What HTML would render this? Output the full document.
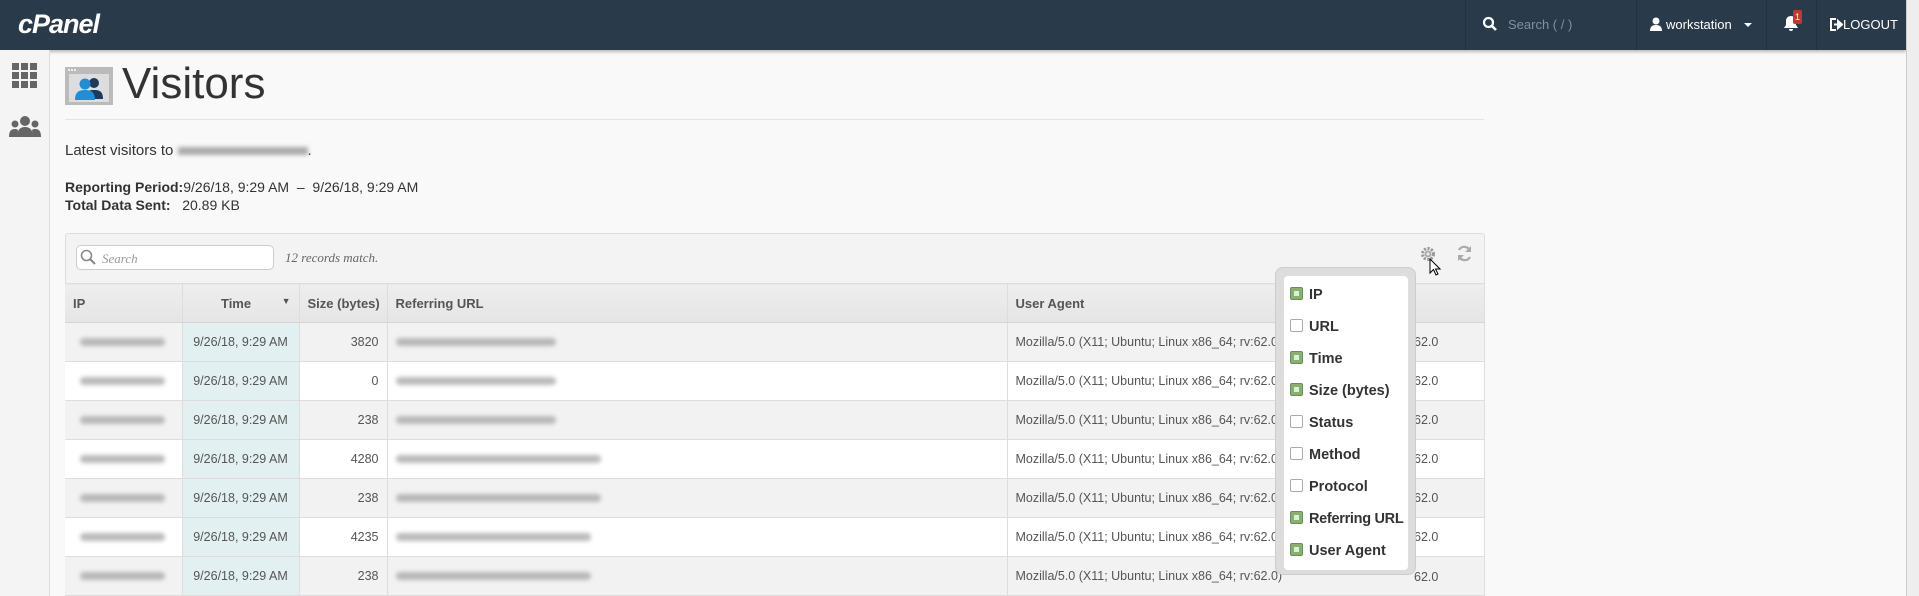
<!DOCTYPE html>
<html style="overflow:hidden;height:596px"><head><meta charset="utf-8"><style>
*{box-sizing:border-box;margin:0;padding:0}
body{width:1919px;height:596px;overflow:hidden;background:#f9f9f9;font-family:"Liberation Sans",sans-serif;position:relative;color:#333}
.top{position:absolute;left:0;top:0;width:1906px;height:50px;background:#293a4a;box-shadow:0 2px 3px rgba(0,0,0,.25)}
.abs{position:absolute}
.sep{position:absolute;top:0;width:1px;height:50px;background:#22313f}
.side{position:absolute;left:0;top:50px;width:50px;height:546px;background:#f4f4f4;border-right:1px solid #ddd}
.blur{position:absolute;height:8px;background:#aaa;border-radius:4px;filter:blur(2px);opacity:.8}
.panel{position:absolute;left:65px;top:233px;width:1420px;height:363px;border:1px solid #ddd;border-bottom:none;background:#f3f3f3;border-radius:3px 3px 0 0}
table{position:absolute;left:65px;top:283px;border-collapse:collapse;width:1420px;font-size:12.5px;table-layout:fixed}
th{height:39px;background:linear-gradient(#eee,#e5e5e5);text-align:left;font-weight:bold;font-size:13px;color:#555;border-right:1px solid #ddd;border-top:1px solid #ddd;border-bottom:1px solid #d5d5d5;padding:0 8px;white-space:nowrap}
td{height:39px;border-right:1px solid #ddd;border-bottom:1px solid #ddd;padding:0 8px;color:#555;position:relative;white-space:nowrap;overflow:hidden}
tr:nth-child(even) td{background:#f2f2f2}
tr:nth-child(odd) td{background:#fff}
td.t{background:#e3f0f1!important;text-align:center}
td.s{text-align:right}
.dd{position:absolute;left:1275px;top:267px;width:141px;height:308px;background:#ddd;border-radius:8px;border:1px solid #ccc}
.ddi{position:absolute;left:8px;top:8px;width:124px;height:294px;background:#fff;border-radius:4px}
.it{position:absolute;left:6px;font-weight:bold;font-size:14.5px;color:#333;height:20px;line-height:20px;white-space:nowrap}
.cb{display:inline-block;width:13px;height:13px;border:1px solid #aaa;border-radius:2px;vertical-align:-1px;margin-right:6px;background:#fff}
.cb.on{background:#8ab070;border-color:#6a8f55;position:relative}
.cb.on:after{content:"";position:absolute;left:3px;top:3px;width:5px;height:5px;background:#dfeed5}
</style></head><body>
<div class="top">
 <div class="abs" style="left:18px;top:9px;color:#fff;font-size:27px;font-weight:bold;font-style:italic;letter-spacing:-1px">cPanel</div>
 <div class="sep" style="left:1465px"></div><div class="sep" style="left:1636px"></div><div class="sep" style="left:1766px"></div><div class="sep" style="left:1816px"></div>
 <svg class="abs" style="left:1482px;top:16px" width="16" height="16" viewBox="0 0 16 16"><circle cx="6.5" cy="6.5" r="4.5" fill="none" stroke="#fff" stroke-width="2.2"/><path d="M10 10l4 4" stroke="#fff" stroke-width="2.6"/></svg>
 <div class="abs" style="left:1508px;top:17px;color:#8190a0;font-size:13px">Search ( / )</div>
 <svg class="abs" style="left:1650px;top:17px" width="12" height="14" viewBox="0 0 12 14"><circle cx="6" cy="4" r="3.5" fill="#fff"/><path d="M0 14c0-5 3-6 6-6s6 1 6 6z" fill="#fff"/></svg>
 <div class="abs" style="left:1666px;top:17px;color:#fff;font-size:13px">workstation</div>
 <div class="abs" style="left:1744px;top:23px;border:4px solid transparent;border-top:4px solid #fff"></div>
 <svg class="abs" style="left:1783px;top:15px" width="16" height="17" viewBox="0 0 16 17"><path d="M8 1c-3 0-5 2-5 5v4l-2 3h14l-2-3V6c0-3-2-5-5-5z M6 14a2 2 0 0 0 4 0z" fill="#fff"/></svg>
 <div class="abs" style="left:1793px;top:10px;width:9px;height:14px;background:#c0392b;color:#fff;font-size:9px;text-align:center;line-height:14px;border-radius:2px">1</div>
 <svg class="abs" style="left:1829px;top:18px" width="14" height="13" viewBox="0 0 14 13"><path d="M7 1H2v11h5" fill="none" stroke="#fff" stroke-width="2"/><path d="M5 6.5h5M9 3l4 3.5-4 3.5z" stroke="#fff" stroke-width="2" fill="#fff"/></svg>
 <div class="abs" style="left:1843px;top:17px;color:#fff;font-size:13px">LOGOUT</div>
</div>
<div class="abs" style="left:1906px;top:0;width:13px;height:596px;background:#eee;border-left:1px solid #ccc"></div>
<div class="side">
 <svg class="abs" style="left:12px;top:13px" width="25" height="25" viewBox="0 0 25 25" fill="#666"><rect x="0" y="0" width="7" height="7"/><rect x="9" y="0" width="7" height="7"/><rect x="18" y="0" width="7" height="7"/><rect x="0" y="9" width="7" height="7"/><rect x="9" y="9" width="7" height="7"/><rect x="18" y="9" width="7" height="7"/><rect x="0" y="18" width="7" height="7"/><rect x="9" y="18" width="7" height="7"/><rect x="18" y="18" width="7" height="7"/></svg>
 <svg class="abs" style="left:9px;top:65px" width="32" height="22" viewBox="0 0 32 22" fill="#666"><circle cx="16" cy="6" r="5"/><circle cx="6" cy="9" r="3.5"/><circle cx="26" cy="9" r="3.5"/><path d="M8 22c0-8 4-10 8-10s8 2 8 10z"/><path d="M0 22c0-6 2-8 6-8 2 0 3 1 3 1l-1 7z M32 22c0-6-2-8-6-8-2 0-3 1-3 1l1 7z"/></svg>
</div>
<svg class="abs" style="left:65px;top:67px" width="48" height="38" viewBox="0 0 48 38"><rect width="48" height="38" fill="#bbb"/><rect x="4" y="7" width="40" height="28" fill="#ddd"/><circle cx="4" cy="3" r="1" fill="#fff"/><circle cx="7" cy="3" r="1" fill="#fff"/><circle cx="10" cy="3" r="1" fill="#fff"/><circle cx="29" cy="16" r="5" fill="#1c3a5c"/><path d="M20 32c0-8 4-9 9-9s9 1 9 9z" fill="#1c3a5c"/><circle cx="20" cy="17" r="5.5" fill="#1e8fd6"/><path d="M10 33c0-8 4-10 10-10s10 2 10 10z" fill="#1e8fd6"/></svg>
<div class="abs" style="left:122px;top:59px;font-size:44px;color:#333">Visitors</div>
<div class="abs" style="left:65px;top:119px;width:1419px;height:1px;background:#e3e3e3"></div>
<div class="abs" style="left:65px;top:142px;font-size:15px">Latest visitors to <span style="display:inline-block;width:130px;height:8px;background:#aaa;filter:blur(2px);vertical-align:middle"></span>.</div>
<div class="abs" style="left:65px;top:178px;font-size:14px;line-height:18px"><b>Reporting Period:</b>9/26/18, 9:29 AM &nbsp;–&nbsp; 9/26/18, 9:29 AM<br><b>Total Data Sent:</b> &nbsp; 20.89 KB</div>
<div class="panel"></div>
<div class="abs" style="left:76px;top:245px;width:198px;height:25px;background:#fff;border:1px solid #ccc;border-radius:5px"></div>
<svg class="abs" style="left:80px;top:249px" width="16" height="16" viewBox="0 0 16 16"><circle cx="6.5" cy="6.5" r="5" fill="none" stroke="#888" stroke-width="1.6"/><path d="M10 10l5 5" stroke="#888" stroke-width="2"/></svg>
<div class="abs" style="left:102px;top:251px;font-size:13px;font-style:italic;color:#999;font-family:'Liberation Serif',serif">Search</div>
<div class="abs" style="left:285px;top:250px;font-size:13px;font-style:italic;color:#666;font-family:'Liberation Serif',serif">12 records match.</div>
<svg class="abs" style="left:1420px;top:246px" width="16" height="16" viewBox="0 0 16 16"><circle cx="8" cy="8" r="5.5" fill="none" stroke="#999" stroke-width="3" stroke-dasharray="2.2 1.4"/><circle cx="8" cy="8" r="3.5" fill="#aaa"/><circle cx="8" cy="8" r="1.5" fill="#eee"/></svg>
<svg class="abs" style="left:1429px;top:258px" width="12" height="18" viewBox="0 0 12 18"><path d="M1 1v14l3.5-3.5 2.5 5.5 2-1-2.5-5H11z" fill="#fff" stroke="#000" stroke-width="1"/></svg>
<svg class="abs" style="left:1456px;top:245px" width="17" height="17" viewBox="0 0 17 17"><path d="M14 6A6 6 0 0 0 3 5M3 11a6 6 0 0 0 11 1" fill="none" stroke="#aaa" stroke-width="2.2"/><path d="M15 1v6h-6zM2 16v-6h6z" fill="#aaa"/></svg>
<table>
<colgroup><col style="width:117px"><col style="width:117px"><col style="width:88px"><col style="width:620px"><col></colgroup>
<tr><th>IP</th><th style="text-align:center">Time <span style="font-size:9px;float:right">▼</span></th><th>Size (bytes)</th><th>Referring URL</th><th>User Agent</th></tr>
<tr><td><div class="blur" style="left:15px;top:15px;width:85px"></div></td><td class="t">9/26/18, 9:29 AM</td><td class="s">3820</td><td><div class="blur" style="left:8px;top:15px;width:160px"></div></td><td>Mozilla/5.0 (X11; Ubuntu; Linux x86_64; rv:62.0)</td></tr>
<tr><td><div class="blur" style="left:15px;top:15px;width:85px"></div></td><td class="t">9/26/18, 9:29 AM</td><td class="s">0</td><td><div class="blur" style="left:8px;top:15px;width:160px"></div></td><td>Mozilla/5.0 (X11; Ubuntu; Linux x86_64; rv:62.0)</td></tr>
<tr><td><div class="blur" style="left:15px;top:15px;width:85px"></div></td><td class="t">9/26/18, 9:29 AM</td><td class="s">238</td><td><div class="blur" style="left:8px;top:15px;width:160px"></div></td><td>Mozilla/5.0 (X11; Ubuntu; Linux x86_64; rv:62.0)</td></tr>
<tr><td><div class="blur" style="left:15px;top:15px;width:85px"></div></td><td class="t">9/26/18, 9:29 AM</td><td class="s">4280</td><td><div class="blur" style="left:8px;top:15px;width:205px"></div></td><td>Mozilla/5.0 (X11; Ubuntu; Linux x86_64; rv:62.0)</td></tr>
<tr><td><div class="blur" style="left:15px;top:15px;width:85px"></div></td><td class="t">9/26/18, 9:29 AM</td><td class="s">238</td><td><div class="blur" style="left:8px;top:15px;width:205px"></div></td><td>Mozilla/5.0 (X11; Ubuntu; Linux x86_64; rv:62.0)</td></tr>
<tr><td><div class="blur" style="left:15px;top:15px;width:85px"></div></td><td class="t">9/26/18, 9:29 AM</td><td class="s">4235</td><td><div class="blur" style="left:8px;top:15px;width:195px"></div></td><td>Mozilla/5.0 (X11; Ubuntu; Linux x86_64; rv:62.0)</td></tr>
<tr><td><div class="blur" style="left:15px;top:15px;width:85px"></div></td><td class="t">9/26/18, 9:29 AM</td><td class="s">238</td><td><div class="blur" style="left:8px;top:15px;width:195px"></div></td><td>Mozilla/5.0 (X11; Ubuntu; Linux x86_64; rv:62.0)</td></tr>
</table>
<div class="abs" style="left:1414px;top:323px;font-size:12.5px;color:#555;line-height:39.1px">62.0<br>62.0<br>62.0<br>62.0<br>62.0<br>62.0<br>62.0</div>
<div class="dd"><div class="ddi">
<div class="it" style="top:9px"><span class="cb on"></span>IP</div>
<div class="it" style="top:41px"><span class="cb"></span>URL</div>
<div class="it" style="top:73px"><span class="cb on"></span>Time</div>
<div class="it" style="top:105px"><span class="cb on"></span>Size (bytes)</div>
<div class="it" style="top:137px"><span class="cb"></span>Status</div>
<div class="it" style="top:169px"><span class="cb"></span>Method</div>
<div class="it" style="top:201px"><span class="cb"></span>Protocol</div>
<div class="it" style="top:233px;letter-spacing:-0.3px"><span class="cb on"></span>Referring URL</div>
<div class="it" style="top:265px"><span class="cb on"></span>User Agent</div>
</div></div>
</body></html>
